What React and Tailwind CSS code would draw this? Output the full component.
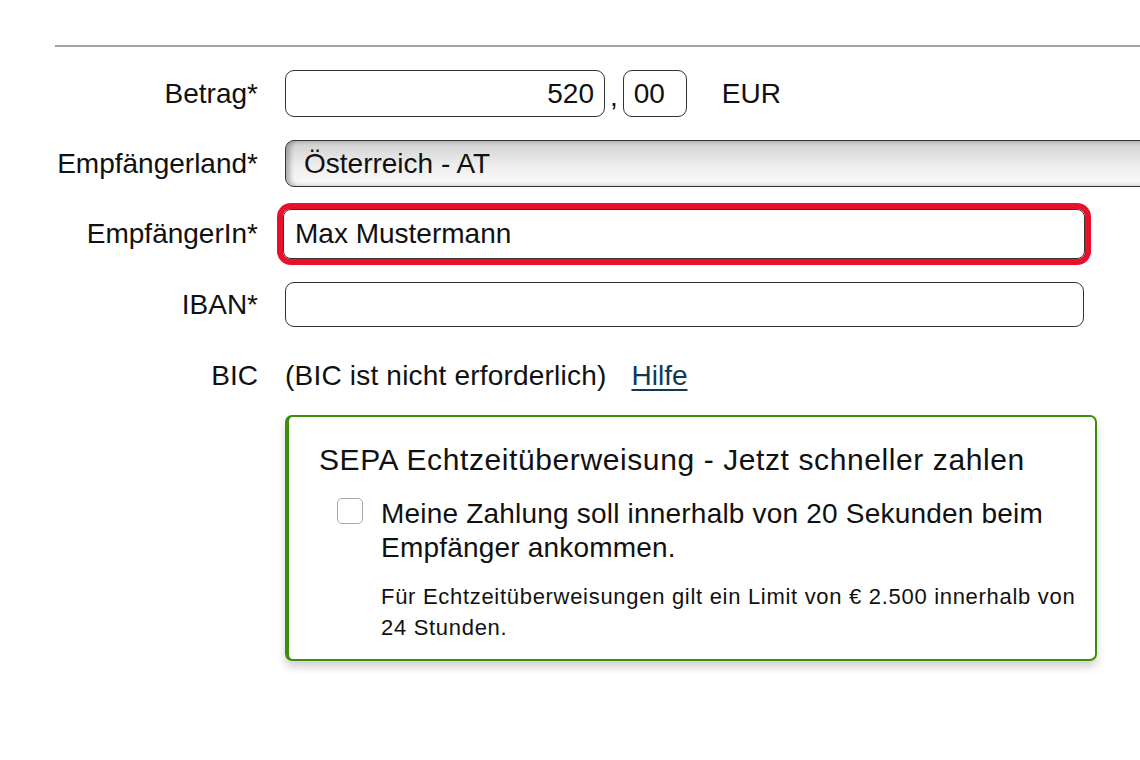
export default function App() {
    return <main className="w-[1140px] h-[760px] overflow-hidden bg-white text-[#111] font-['Liberation_Sans',Arial,sans-serif]">
        <div className="ml-[55px] mt-[45px] h-[2px] bg-[#a3a3a3]"></div>

        <div className="pl-[55px] grid grid-cols-[203px_1fr] gap-x-[27px] text-[28px] leading-[34px]">
            {/* Betrag */}
            <div className="mt-[23px] h-[47px] flex items-center justify-end">Betrag*</div>
            <div className="mt-[23px] flex items-center">
                <div className="w-[320px] h-[47px] border border-[#333] rounded-[9px] flex items-center justify-end pr-[10px]">520</div>
                <span className="px-[5px] self-end pb-[3px]">,</span>
                <div className="w-[64px] h-[47px] border border-[#333] rounded-[9px] flex items-center pl-[10px]">00</div>
                <span className="ml-[35px]">EUR</span>
            </div>

            {/* Empfängerland */}
            <div className="mt-[23px] h-[47px] flex items-center justify-end">Empfängerland*</div>
            <div className="mt-[23px]">
                <div className="w-[880px] h-[47px] border border-[#333] rounded-l-[9px] flex items-center pl-[18px] bg-linear-to-b from-[#cfcfcf] via-[#ececec] to-[#fbfbfb] shadow-[inset_4px_0_5px_rgba(0,0,0,0.28)]">Österreich - AT</div>
            </div>

            {/* EmpfängerIn */}
            <div className="mt-[22px] h-[50px] flex items-center justify-end">EmpfängerIn*</div>
            <div className="mt-[22px]">
                <div className="ml-[-2px] w-[802px] h-[50px] border border-[#333] rounded-[8px] ring-[6px] ring-[#e8102a] flex items-center pl-[11px]">Max Mustermann</div>
            </div>

            {/* IBAN */}
            <div className="mt-[23px] h-[45px] flex items-center justify-end">IBAN*</div>
            <div className="mt-[23px]">
                <div className="w-[799px] h-[45px] border border-[#333] rounded-[9px]"></div>
            </div>

            {/* BIC */}
            <div className="mt-[32px] flex items-center justify-end">BIC</div>
            <div className="mt-[32px] flex items-center gap-[25px]">
                <span className="tracking-[0.2px]">(BIC ist nicht erforderlich)</span>
                <a href="#" className="text-[#0b3a5c] underline underline-offset-[4px] decoration-[2px]">Hilfe</a>
            </div>

            {/* SEPA box */}
            <div></div>
            <div className="mt-[22px]">
                <div className="w-[812px] h-[246px] border-2 border-l-4 border-[#3d8c0a] rounded-[7px] shadow-[0_6px_8px_rgba(0,0,0,0.18)] pt-[26px] pl-[30px] pr-[14px]">
                    <div className="text-[30px] tracking-[0.6px]">SEPA Echtzeitüberweisung - Jetzt schneller zahlen</div>
                    <div className="mt-[20px] flex items-start pl-[18px] gap-[18px]">
                        <div className="mt-[1px] w-[26px] h-[26px] shrink-0 border border-[#a8a8a8] rounded-[5px] bg-white"></div>
                        <div>
                            <div className="tracking-[0.2px]">Meine Zahlung soll innerhalb von 20 Sekunden beim Empfänger ankommen.</div>
                            <div className="mt-[16px] text-[22px] leading-[31px] tracking-[0.7px]">Für Echtzeitüberweisungen gilt ein Limit von € 2.500 innerhalb von 24 Stunden.</div>
                        </div>
                    </div>
                </div>
            </div>
        </div>
    </main>
}
